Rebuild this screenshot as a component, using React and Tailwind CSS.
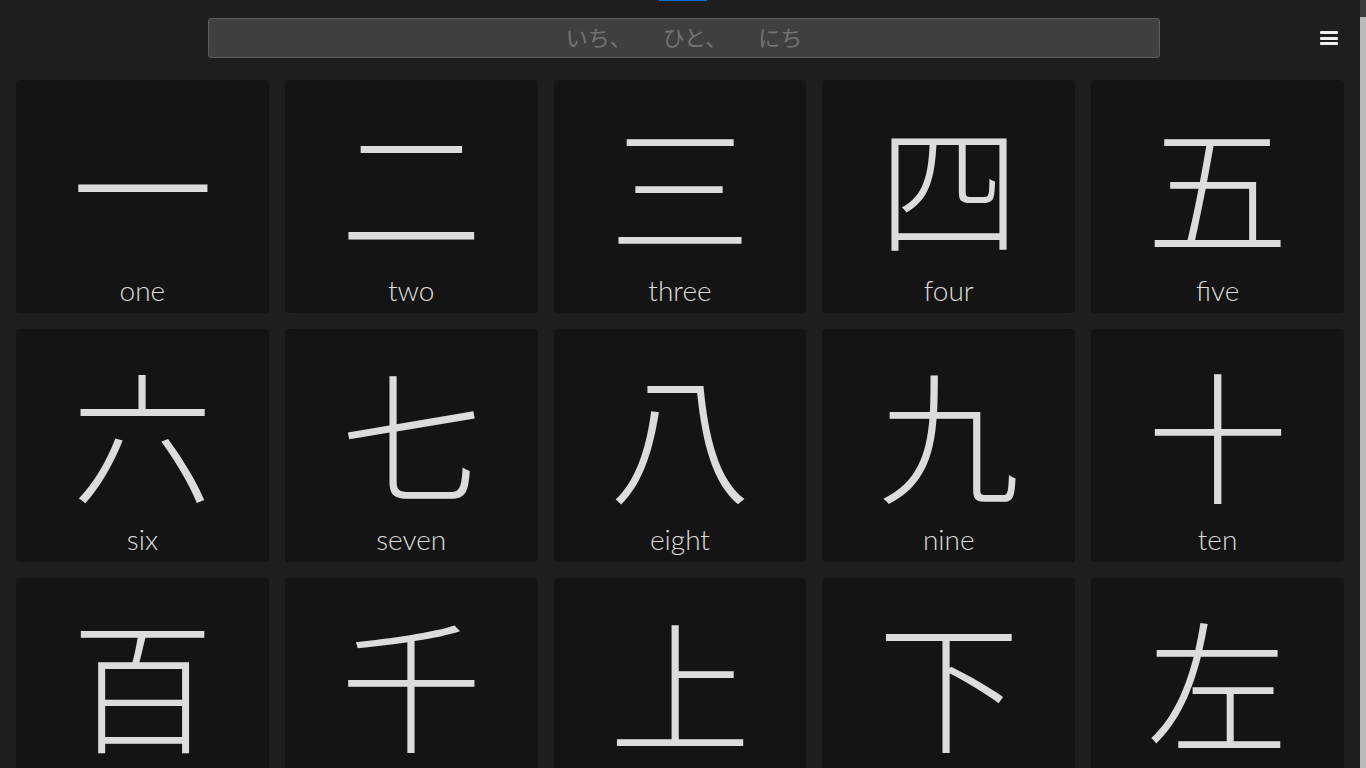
const kanji = [
  { k: '一', m: 'one' },
  { k: '二', m: 'two' },
  { k: '三', m: 'three' },
  { k: '四', m: 'four' },
  { k: '五', m: 'five' },
  { k: '六', m: 'six' },
  { k: '七', m: 'seven' },
  { k: '八', m: 'eight' },
  { k: '九', m: 'nine' },
  { k: '十', m: 'ten' },
  { k: '百', m: 'hundred' },
  { k: '千', m: 'thousand' },
  { k: '上', m: 'up' },
  { k: '下', m: 'down' },
  { k: '左', m: 'left' },
];

function KanjiCard({ k, m }) {
  return (
    <div className="h-[233px] rounded-[4px] bg-[#141414] flex flex-col items-center overflow-hidden">
      <div
        className="mt-[32px] h-[140px] text-[142px] leading-[140px] font-light text-[#dcdcdc]"
        style={{ fontFamily: '"Noto Sans CJK JP", sans-serif' }}
      >
        {k}
      </div>
      <div
        className="mt-[22px] text-[28px] leading-[32px] font-light text-[#dcdcdc]"
        style={{ fontFamily: 'Lato, "Open Sans", sans-serif' }}
      >
        {m}
      </div>
    </div>
  );
}

export default function App() {
  return (
    <div className="h-screen w-full flex overflow-hidden bg-[#1e1e1e]">
      <div className="relative flex-1 min-w-0">
        {/* top loading bar */}
        <div className="absolute top-0 left-[659px] w-[48px] h-[1px] bg-[#0a6fd6]" />

        {/* Header */}
        <div className="h-[76px] flex items-center">
          <div className="ml-[208px] w-[952px] h-[40px] rounded-[3px] border border-[#5c5c5c] bg-[#404040] flex items-center justify-center">
            <div
              className="flex gap-[31px] pb-[5px] text-[22px] leading-[28px] text-[#737373]"
              style={{ fontFamily: '"Noto Sans CJK JP", sans-serif' }}
            >
              <span>いち、</span>
              <span>ひと、</span>
              <span>にち</span>
            </div>
          </div>
          <button className="ml-auto mr-[22px] w-[18px] flex flex-col gap-[2.5px]">
            <span className="block h-[3px] rounded-[1px] bg-[#f0f0f0]" />
            <span className="block h-[3px] rounded-[1px] bg-[#f0f0f0]" />
            <span className="block h-[3px] rounded-[1px] bg-[#f0f0f0]" />
          </button>
        </div>

        {/* Grid */}
        <div className="mt-[4px] px-4 grid grid-cols-5 gap-4">
          {kanji.map((item) => (
            <KanjiCard key={item.k} {...item} />
          ))}
        </div>
      </div>

      {/* scrollbar */}
      <div className="w-[6px] flex flex-col">
        <div className="h-[17px] bg-[#3c3c3c]" />
        <div className="flex-1 bg-[#bababa]" />
      </div>
    </div>
  );
}
